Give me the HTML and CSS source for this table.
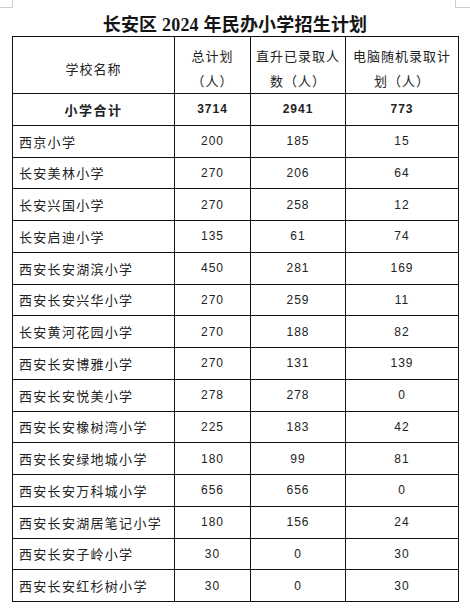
FILE: index.html
```html
<!DOCTYPE html>
<html lang="zh-CN">
<head>
<meta charset="utf-8">
<link rel="stylesheet" href="styles.css">
</head>
<body>
<div class="page">
  <div class="marks">
    <span class="mark mark-left"></span>
    <span class="mark mark-right"></span>
  </div>
  <h1 class="title">长安区 2024 年民办小学招生计划</h1>
  <table class="plan">
    <colgroup>
      <col class="c1"><col class="c2"><col class="c3"><col class="c4">
    </colgroup>
    <thead>
      <tr class="head">
        <th class="name-h">学校名称</th>
        <th>总计划<br>（人）</th>
        <th>直升已录取人<br>数（人）</th>
        <th>电脑随机录取计<br>划（人）</th>
      </tr>
    </thead>
    <tbody>
      <tr class="total"><td class="tname">小学合计</td><td>3714</td><td>2941</td><td>773</td></tr>
      <tr><td class="name">西京小学</td><td>200</td><td>185</td><td>15</td></tr>
      <tr><td class="name">长安美林小学</td><td>270</td><td>206</td><td>64</td></tr>
      <tr><td class="name">长安兴国小学</td><td>270</td><td>258</td><td>12</td></tr>
      <tr><td class="name">长安启迪小学</td><td>135</td><td>61</td><td>74</td></tr>
      <tr><td class="name">西安长安湖滨小学</td><td>450</td><td>281</td><td>169</td></tr>
      <tr><td class="name">西安长安兴华小学</td><td>270</td><td>259</td><td>11</td></tr>
      <tr><td class="name">长安黄河花园小学</td><td>270</td><td>188</td><td>82</td></tr>
      <tr><td class="name">西安长安博雅小学</td><td>270</td><td>131</td><td>139</td></tr>
      <tr><td class="name">西安长安悦美小学</td><td>278</td><td>278</td><td>0</td></tr>
      <tr><td class="name">西安长安橡树湾小学</td><td>225</td><td>183</td><td>42</td></tr>
      <tr><td class="name">西安长安绿地城小学</td><td>180</td><td>99</td><td>81</td></tr>
      <tr><td class="name">西安长安万科城小学</td><td>656</td><td>656</td><td>0</td></tr>
      <tr><td class="name">西安长安湖居笔记小学</td><td>180</td><td>156</td><td>24</td></tr>
      <tr><td class="name">西安长安子岭小学</td><td>30</td><td>0</td><td>30</td></tr>
      <tr><td class="name">西安长安红杉树小学</td><td>30</td><td>0</td><td>30</td></tr>
    </tbody>
  </table>
</div>
</body>
</html>
```

FILE: styles.css
```css
html, body {
  margin: 0;
  padding: 0;
  background: #ffffff;
}

.page {
  width: 470px;
  height: 608px;
  overflow: hidden;
  font-family: "Liberation Sans", "Noto Sans CJK SC", sans-serif;
  color: #1a1a1a;
}

.marks {
  display: flex;
  justify-content: space-between;
  height: 8px;
}

.mark {
  display: block;
  width: 12px;
  height: 7px;
  border-bottom: 1px solid #cfcfcf;
}

.mark-left {
  border-right: 1px solid #cfcfcf;
}

.mark-right {
  width: 14px;
  border-left: 1px solid #cfcfcf;
}

.title {
  margin: 5px 0 0;
  height: 23px;
  line-height: 25px;
  text-align: center;
  font-family: "Liberation Serif", "Noto Sans CJK SC", serif;
  font-size: 18px;
  font-weight: bold;
  color: #151515;
  letter-spacing: 0.2px;
}

.plan {
  margin-left: 12px;
  width: 446px;
  border-collapse: collapse;
  table-layout: fixed;
  font-size: 13px;
}

.c1 { width: 162px; }
.c2 { width: 76px; }
.c3 { width: 95px; }
.c4 { width: 113px; }

.plan th,
.plan td {
  border: 1px solid #111111;
  padding: 0;
  text-align: center;
  vertical-align: middle;
  font-weight: normal;
  letter-spacing: 1px;
}

.plan .head {
  height: 56px;
}

.head th {
  padding-top: 6px;
  line-height: 25px;
  font-family: "Noto Sans CJK SC", sans-serif;
  font-size: 13px;
  color: #222;
}

.head .name-h {
  padding-top: 8px;
  line-height: 20px;
}

.plan tbody tr {
  height: 31.75px;
}

.plan tbody td {
  font-family: "Liberation Sans", "Noto Sans CJK SC", sans-serif;
  font-size: 12px;
  color: #222;
}

.plan td.name {
  text-align: left;
  padding-left: 6px;
  font-family: "Noto Sans CJK SC", sans-serif;
  font-size: 13px;
  letter-spacing: 1.3px;
}

.total td {
  font-weight: bold;
  color: #111;
}

.total td.tname {
  font-family: "Noto Sans CJK SC", sans-serif;
  font-size: 13px;
  letter-spacing: 1.5px;
}
```
